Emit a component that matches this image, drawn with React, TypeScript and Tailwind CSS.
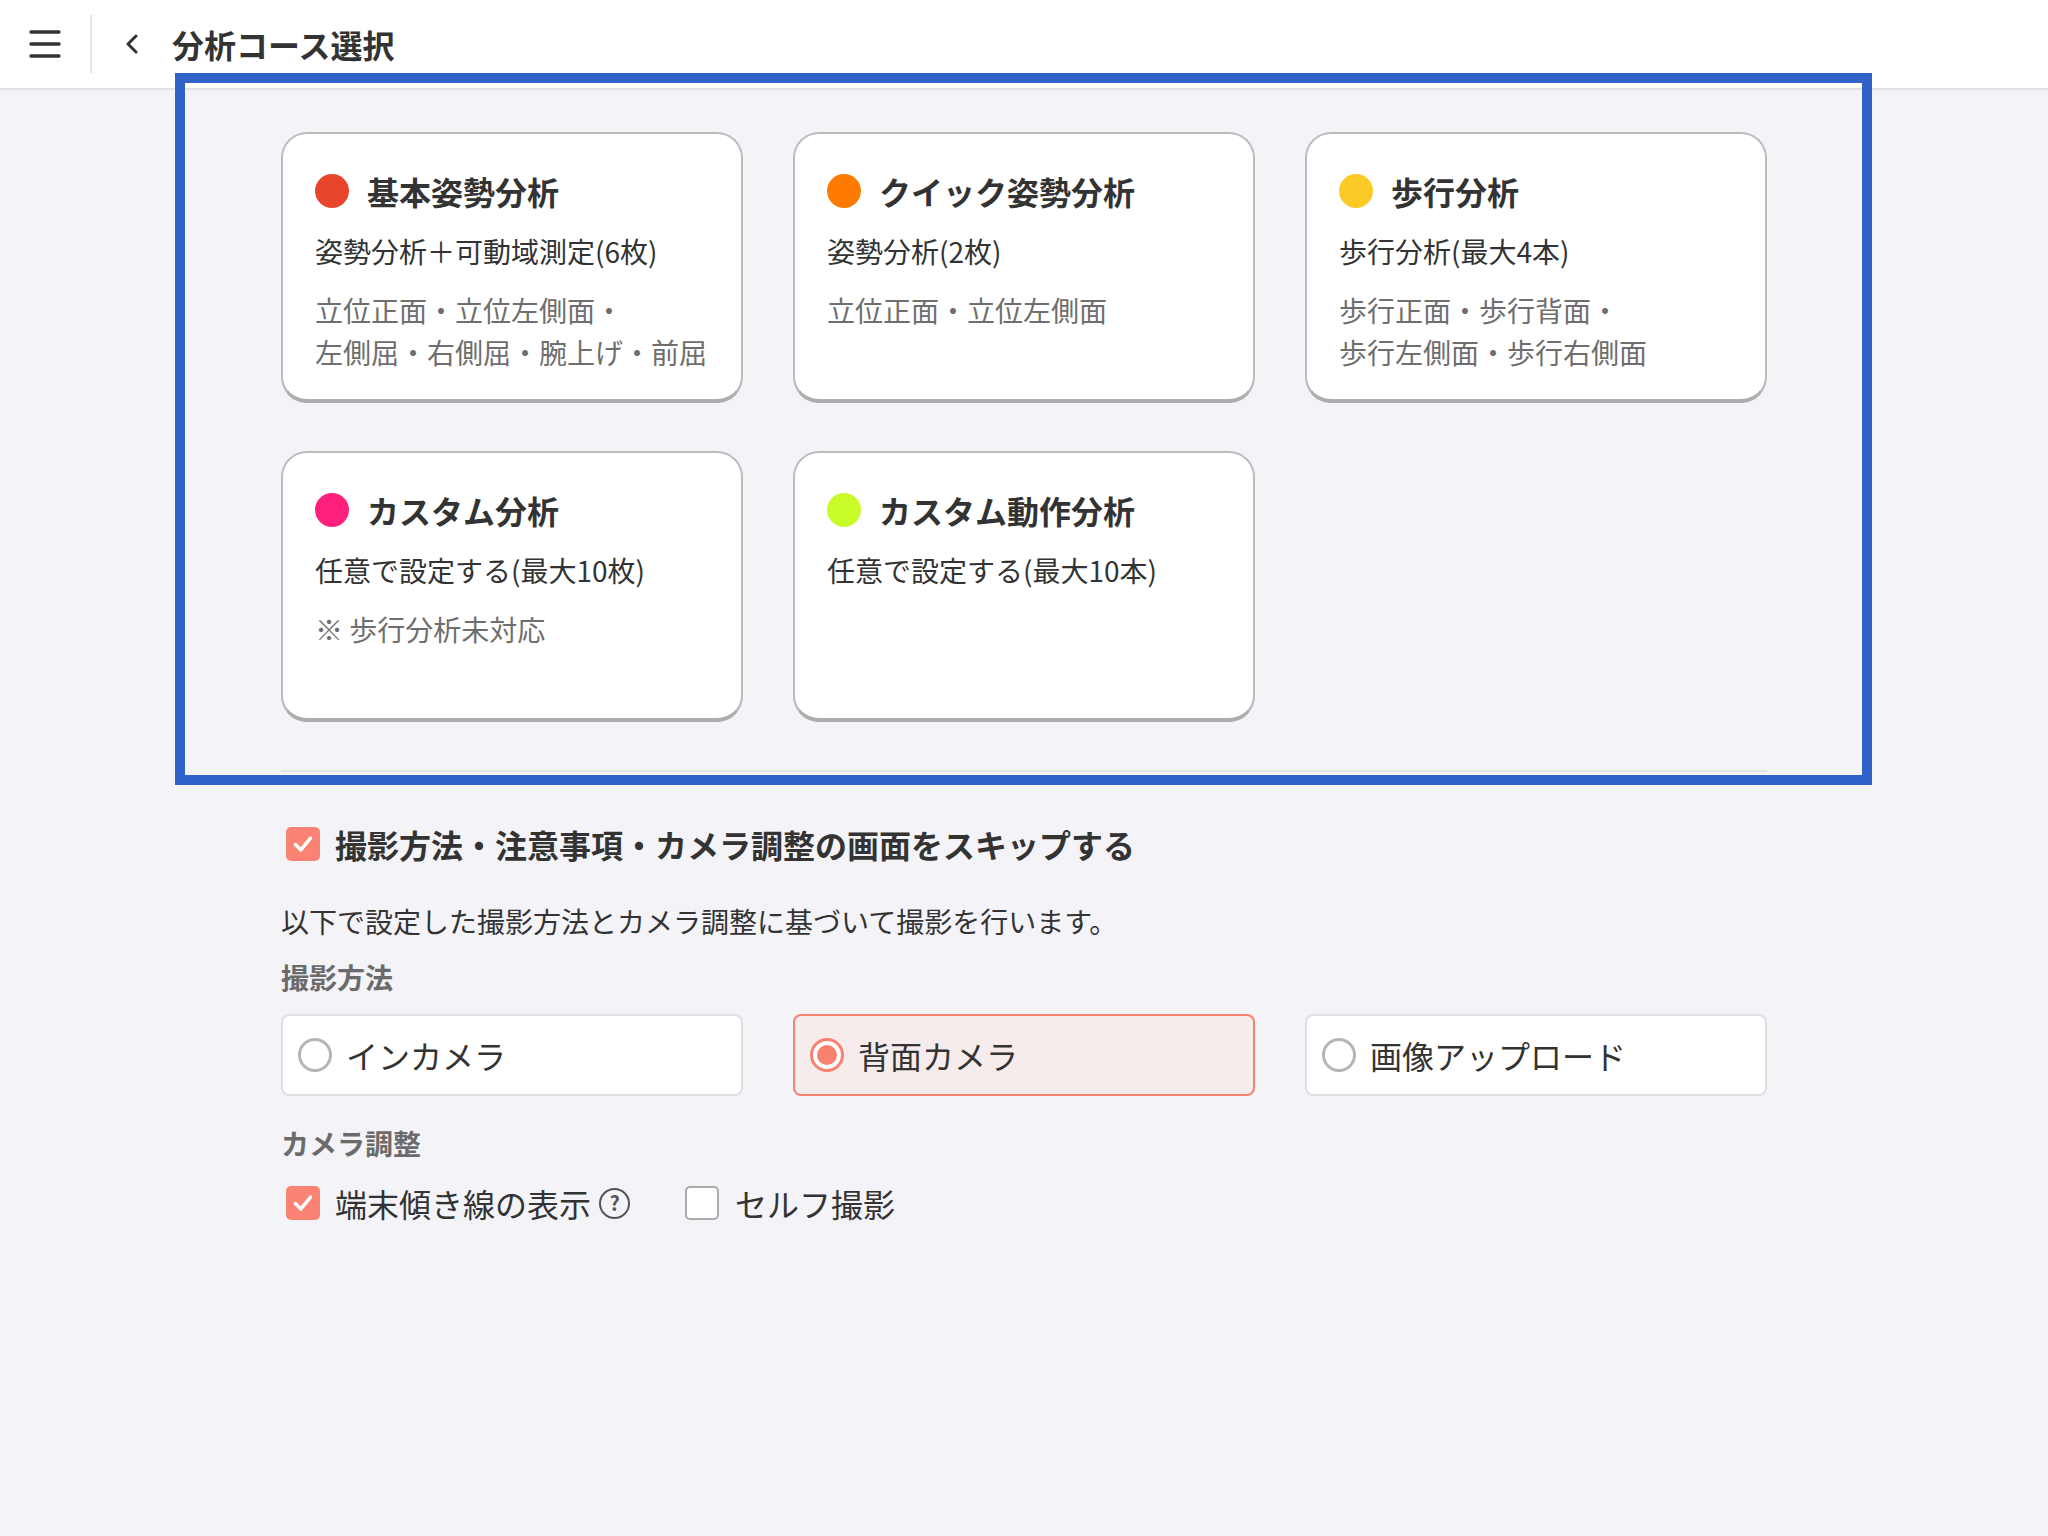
import React from "react";

const FONT = "font-['Noto_Sans_CJK_JP','Noto_Sans',sans-serif]";

type Course = {
  color: string;
  title: string;
  sub: string;
  lines: string[];
};

const courses: Course[] = [
  {
    color: "bg-[#e8452c]",
    title: "基本姿勢分析",
    sub: "姿勢分析＋可動域測定(6枚)",
    lines: ["立位正面・立位左側面・", "左側屈・右側屈・腕上げ・前屈"],
  },
  {
    color: "bg-[#ff7b00]",
    title: "クイック姿勢分析",
    sub: "姿勢分析(2枚)",
    lines: ["立位正面・立位左側面"],
  },
  {
    color: "bg-[#fbca26]",
    title: "歩行分析",
    sub: "歩行分析(最大4本)",
    lines: ["歩行正面・歩行背面・", "歩行左側面・歩行右側面"],
  },
  {
    color: "bg-[#ff1f7d]",
    title: "カスタム分析",
    sub: "任意で設定する(最大10枚)",
    lines: ["※ 歩行分析未対応"],
  },
  {
    color: "bg-[#c8fb27]",
    title: "カスタム動作分析",
    sub: "任意で設定する(最大10本)",
    lines: [],
  },
];

function CourseCard({ c }: { c: Course }) {
  return (
    <div className="h-[271px] rounded-[26px] bg-white border-2 border-[#bcbcbc] border-b-[4px] border-b-[#adadad] pl-[32px] pr-[20px] pt-[36px]">
      <div className="flex items-center gap-[18px] h-[42px]">
        <span className={`block w-[34px] h-[34px] rounded-full ${c.color}`} />
        <span className="text-[32px] leading-[42px] font-bold text-[#333333]">{c.title}</span>
      </div>
      <div className="mt-[18px] text-[28px] leading-[42px] text-[#333333]">{c.sub}</div>
      {c.lines.length > 0 && (
        <div className="mt-[17px] text-[28px] leading-[42px] text-[#6e6e6e]">
          {c.lines.map((l) => (
            <div key={l}>{l}</div>
          ))}
        </div>
      )}
    </div>
  );
}

function CheckIcon() {
  return (
    <svg viewBox="0 0 24 24" className="w-[26px] h-[26px]" fill="none" stroke="white" strokeWidth={3.2} strokeLinecap="round" strokeLinejoin="round">
      <polyline points="5,12.5 10,17.5 19,6.5" />
    </svg>
  );
}

function Checkbox({ checked }: { checked: boolean }) {
  return checked ? (
    <span className="flex w-[34px] h-[34px] rounded-[5px] bg-[#fa8374] items-center justify-center shrink-0">
      <CheckIcon />
    </span>
  ) : (
    <span className="block w-[34px] h-[34px] rounded-[5px] bg-white border-2 border-[#ababab] shrink-0" />
  );
}

function Radio({ label, selected }: { label: string; selected: boolean }) {
  return (
    <div
      className={`h-[82px] rounded-[8px] border-2 flex items-center pl-[15px] gap-[14px] ${
        selected ? "bg-[#f6ecec] border-[#f8826f]" : "bg-white border-[#e0e0e0]"
      }`}
    >
      {selected ? (
        <span className="flex w-[34px] h-[34px] rounded-full border-[3px] border-[#f8826f] bg-white items-center justify-center">
          <span className="block w-[20px] h-[20px] rounded-full bg-[#f8826f]" />
        </span>
      ) : (
        <span className="block w-[34px] h-[34px] rounded-full border-[3px] border-[#b5b5b5] bg-white" />
      )}
      <span className="text-[32px] leading-[42px] text-[#333333]">{label}</span>
    </div>
  );
}

export default function App() {
  return (
    <div className={`relative w-[2048px] h-[1536px] bg-[#f3f3f8] ${FONT}`}>
      {/* Header */}
      <div className="h-[90px] bg-white border-b-2 border-[#e2e2e2] flex items-center">
        <div className="w-[90px] h-full flex items-center justify-center">
          <svg viewBox="0 0 32 28" className="w-[32px] h-[28px]" fill="none" stroke="#333333" strokeWidth={3.4} strokeLinecap="round">
            <line x1="2" y1="2" x2="30" y2="2" />
            <line x1="2" y1="14" x2="30" y2="14" />
            <line x1="2" y1="26" x2="30" y2="26" />
          </svg>
        </div>
        <div className="w-[2px] h-[58px] bg-[#e4e4e4]" />
        <svg viewBox="0 0 14 20" className="ml-[33px] w-[14px] h-[20px]" fill="none" stroke="#333333" strokeWidth={3} strokeLinecap="round" strokeLinejoin="round">
          <polyline points="11,2 3,10 11,18" />
        </svg>
        <span className="ml-[33px] text-[32px] font-bold text-[#333333] leading-[42px]">分析コース選択</span>
      </div>

      {/* Content */}
      <div className="w-[1486px] mx-auto pt-[42px]">
        <div className="grid grid-cols-3 gap-x-[50px] gap-y-[48px]">
          {courses.map((c) => (
            <CourseCard key={c.title} c={c} />
          ))}
        </div>

        <div className="mt-[48px] h-[2px] bg-[#e2e2e2]" />

        <div className="mt-[51px] flex items-center gap-[15px] pl-[5px] h-[42px]">
          <Checkbox checked />
          <span className="text-[32px] leading-[42px] font-bold text-[#333333]">
            撮影方法・注意事項・カメラ調整の画面をスキップする
          </span>
        </div>

        <div className="mt-[35px] text-[28px] leading-[42px] text-[#333333]">
          以下で設定した撮影方法とカメラ調整に基づいて撮影を行います。
        </div>

        <div className="mt-[15px] text-[28px] leading-[40px] font-bold text-[#6b6b6b]">撮影方法</div>

        <div className="mt-[17px] grid grid-cols-3 gap-x-[50px]">
          <Radio label="インカメラ" selected={false} />
          <Radio label="背面カメラ" selected />
          <Radio label="画像アップロード" selected={false} />
        </div>

        <div className="mt-[27px] text-[28px] leading-[40px] font-bold text-[#6b6b6b]">カメラ調整</div>

        <div className="mt-[19px] flex items-center h-[42px] pl-[5px]">
          <Checkbox checked />
          <span className="ml-[15px] text-[32px] leading-[42px] text-[#333333]">端末傾き線の表示</span>
          <span className="ml-[8px] flex w-[31px] h-[31px] rounded-full border-[2.5px] border-[#555555] items-center justify-center text-[20px] leading-none font-bold text-[#555555]">
            ?
          </span>
          <span className="ml-[55px] flex">
            <Checkbox checked={false} />
          </span>
          <span className="ml-[16px] text-[32px] leading-[42px] text-[#333333]">セルフ撮影</span>
        </div>
      </div>

      {/* Annotation overlay */}
      <div className="absolute left-[175px] top-[73px] w-[1697px] h-[712px] border-[10px] border-[#3062c9] pointer-events-none" />
    </div>
  );
}
